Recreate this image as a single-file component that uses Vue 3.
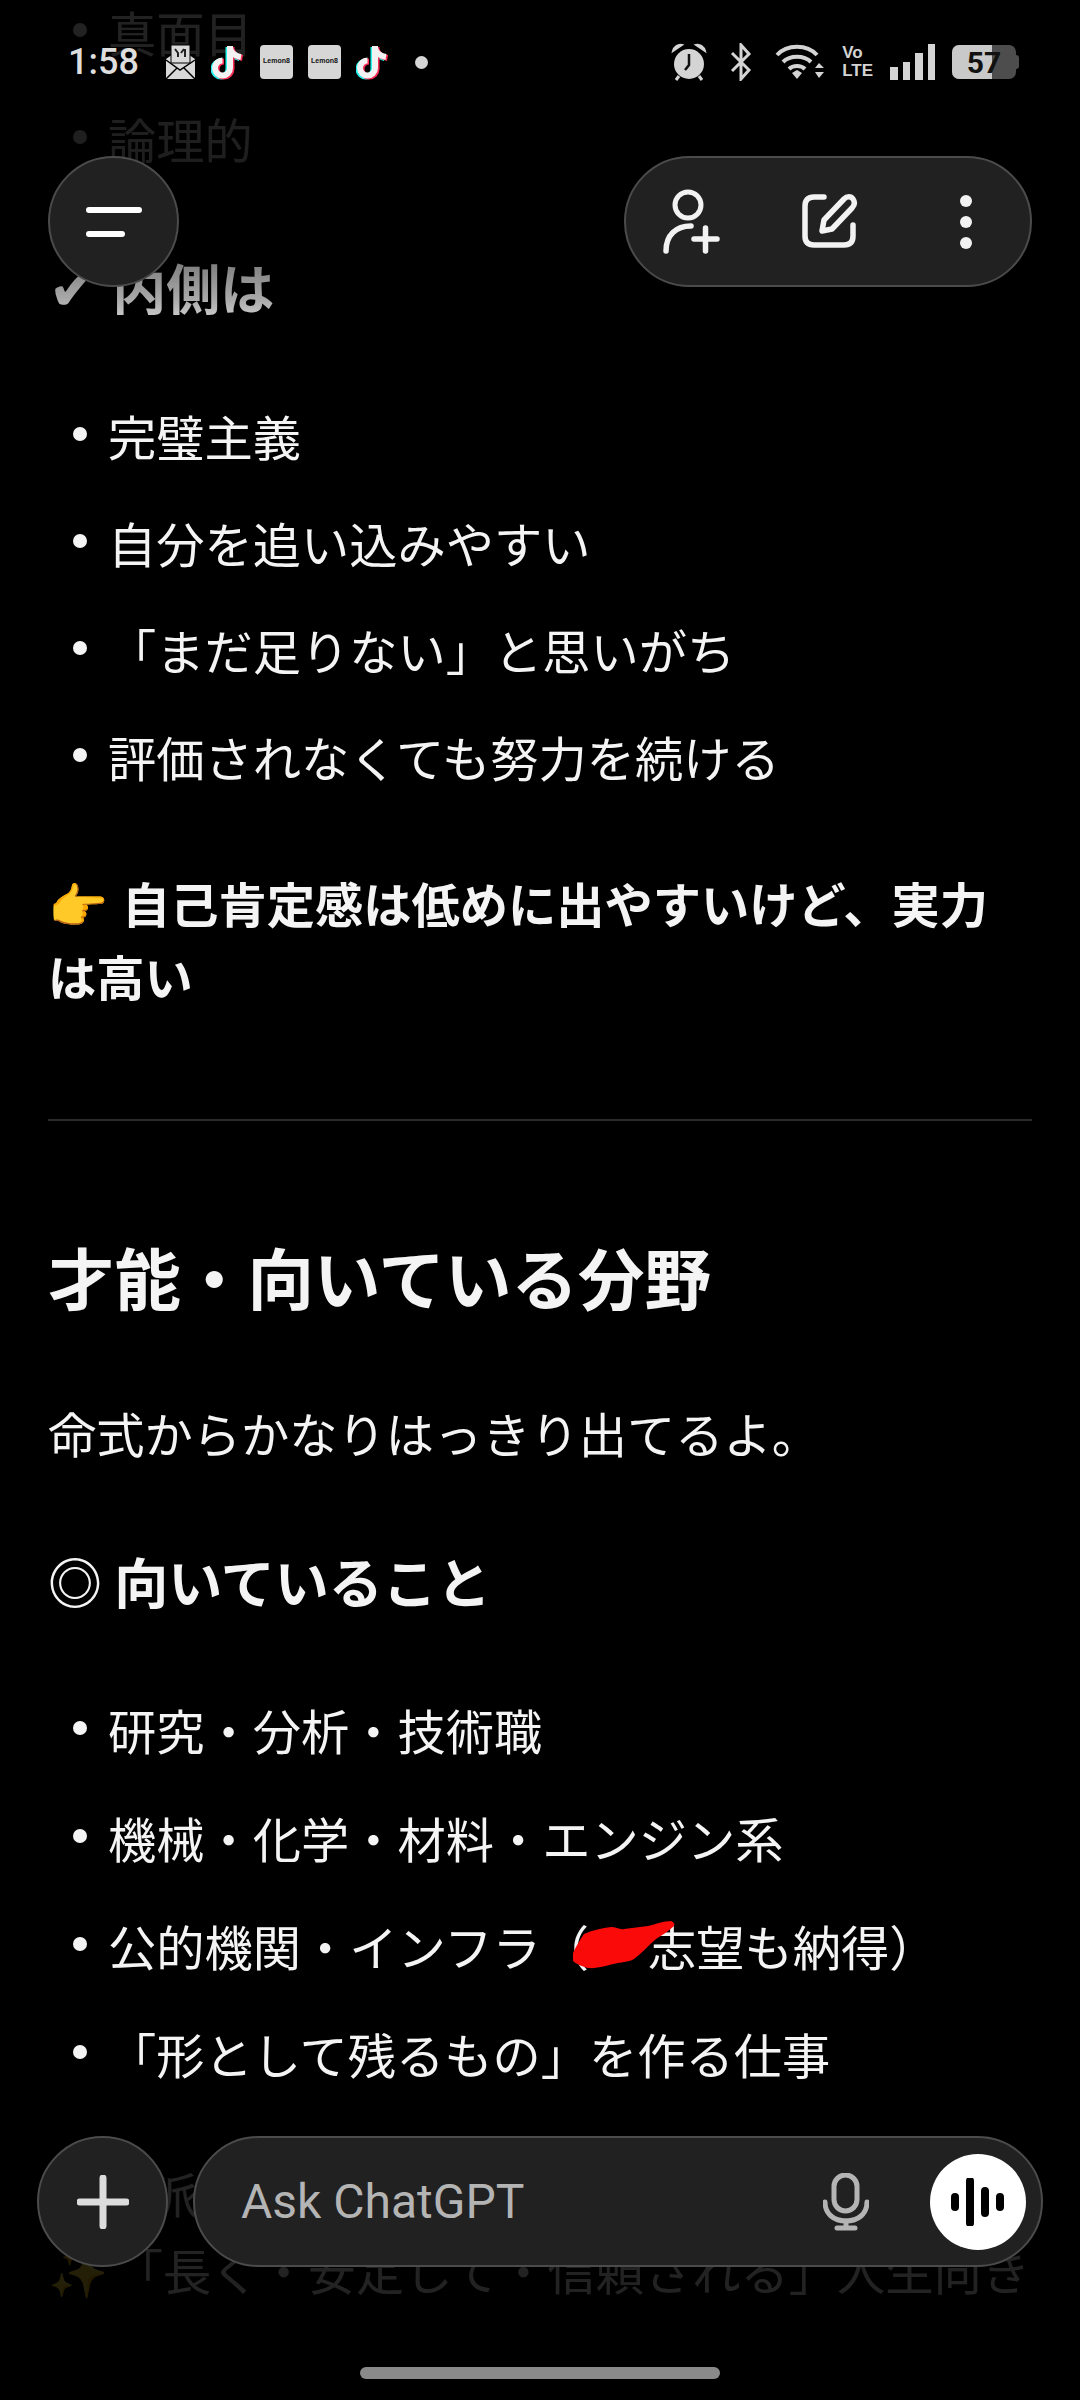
<script setup>
const innerTraits = ['完璧主義', '自分を追い込みやすい', '「まだ足りない」と思いがち', '評価されなくても努力を続ける']
const outerTraits = ['真面目', '論理的']
const goodAt = ['研究・分析・技術職', '機械・化学・材料・エンジン系']
</script>

<template>
  <div class="page">
    <div class="thread">
      <ul class="list first">
        <li v-for="t in outerTraits" :key="t">{{ t }}</li>
      </ul>
      <h3 class="sub inner_head"><span class="check">✔</span> 内側は</h3>
      <ul class="list">
        <li v-for="t in innerTraits" :key="t">{{ t }}</li>
      </ul>
      <p class="strong"><span class="emoji">👉</span> 自己肯定感は低めに出やすいけど、実力は高い</p>
      <hr class="rule" />
      <h2 class="title">才能・向いている分野</h2>
      <p class="lead">命式からかなりはっきり出てるよ。</p>
      <h3 class="sub">◎ 向いていること</h3>
      <ul class="list good">
        <li v-for="t in goodAt" :key="t">{{ t }}</li>
        <li>公的機関・インフラ（<span class="hidden_word"><svg class="scribble" viewBox="0 0 104 48"><path d="M13 13C22 9 31 7 40 6c5 0 9 3 13 2 8-1 16-2 24-3 8-2 16-5 23-5 3 1 4 3 3 5-5 5-12 9-18 13-7 6-14 14-22 20-5 3-11 3-16 4-10 2-21 6-30 5-8-2-13-5-15-7 0-3 0-6 0-8 3-7 7-13 11-19z" fill="#fb0a0a"/></svg></span>志望も納得）</li>
        <li>「形として残るもの」を作る仕事</li>
      </ul>
      <p class="after">派</p>
      <p class="last">✨ 「長く・安定して・信頼される」人生向き</p>
    </div>

    <div class="fade_top"></div>
    <div class="fade_bottom"></div>

    <div class="status">
      <div class="status_left">
        <span class="time">1:58</span>
        <svg class="s_icon" width="31" height="36" viewBox="0 0 31 36">
          <path d="M1 15L15.500 5 30 15v20H1z" fill="#d9d9d9"/>
          <rect x="6" y="1" width="19" height="18" fill="#d9d9d9" stroke="#000"/>
          <path d="M1 16l14 10 15-10M1 35l11-11M30 35L19 24" stroke="#000" stroke-width="1.500" fill="none"/>
          <path d="M10 5l3 4v4M19 5l-3 4M20 5v8" stroke="#222" stroke-width="2" fill="none"/>
        </svg>
        <svg class="s_icon tiktok" width="34" height="36" viewBox="0 0 34 36">
          <g fill="none" stroke-width="6">
            <path d="M19 2v22a7.500 7.500 0 1 1-7.500-7.500M19 4c1 5 5 8 11 9" stroke="#25f4ee" transform="translate(-1.500 1)"/>
            <path d="M19 2v22a7.500 7.500 0 1 1-7.500-7.500M19 4c1 5 5 8 11 9" stroke="#fe2c55" transform="translate(1.500 1)"/>
            <path d="M19 2v22a7.500 7.500 0 1 1-7.500-7.500M19 4c1 5 5 8 11 9" stroke="#f2f2f2"/>
          </g>
        </svg>
        <span class="lemon">Lemon8</span>
        <span class="lemon">Lemon8</span>
        <svg class="s_icon tiktok" width="34" height="36" viewBox="0 0 34 36">
          <g fill="none" stroke-width="6">
            <path d="M19 2v22a7.500 7.500 0 1 1-7.500-7.500M19 4c1 5 5 8 11 9" stroke="#25f4ee" transform="translate(-1.500 1)"/>
            <path d="M19 2v22a7.500 7.500 0 1 1-7.500-7.500M19 4c1 5 5 8 11 9" stroke="#fe2c55" transform="translate(1.500 1)"/>
            <path d="M19 2v22a7.500 7.500 0 1 1-7.500-7.500M19 4c1 5 5 8 11 9" stroke="#f2f2f2"/>
          </g>
        </svg>
        <span class="more_dot"></span>
      </div>
      <div class="status_right">
        <svg class="alarm" width="36" height="38" viewBox="0 0 36 38">
          <circle cx="18" cy="21" r="15" fill="#d4d4d4"/>
          <path d="M18 11v11l-4 5" stroke="#111" stroke-width="2.500" fill="none"/>
          <path d="M2 8c1-4 5-7 9-6zM34 8c-1-4-5-7-9-6z" fill="#d4d4d4" stroke="#d4d4d4" stroke-width="2"/>
          <path d="M8 33l-3 4M28 33l3 4" stroke="#d4d4d4" stroke-width="3"/>
        </svg>
        <svg class="bt" width="22" height="38" viewBox="0 0 22 38">
          <path d="M2 10l17 17-8 9V2l8 9L2 28" fill="none" stroke="#d4d4d4" stroke-width="3"/>
        </svg>
        <svg width="50" height="38" viewBox="0 0 50 38">
          <path d="M2 12c10-11 30-11 40 0M8 19c7-7 21-7 28 0M14 26c4-4 12-4 16 0" fill="none" stroke="#d4d4d4" stroke-width="4"/>
          <path d="M17 30l5-3 5 3-5 6z" fill="#d4d4d4"/>
          <path d="M40 25l4-5 5 5zM40 29l4 6 5-6z" fill="#d4d4d4"/>
        </svg>
        <span class="volte"><b>Vo</b><b>LTE</b></span>
        <span class="signal"><i style="height: 13px"></i><i style="height: 18px"></i><i style="height: 27px"></i><i style="height: 36px"></i></span>
        <span class="battery"><span class="battery_fill"></span><span class="battery_num">57</span><span class="battery_tip"></span></span>
      </div>
    </div>

    <button class="round_btn menu_btn">
      <svg width="56" height="32" viewBox="0 0 56 32">
        <path d="M3 4h50M3 28h33" stroke="#fff" stroke-width="6" stroke-linecap="round"/>
      </svg>
    </button>

    <div class="actions">
      <svg class="act" viewBox="0 0 60 66">
        <circle cx="27" cy="16" r="13" fill="none" stroke="#f2f2f2" stroke-width="5"/>
        <path d="M5 62c0-16 10-25 25-25" fill="none" stroke="#f2f2f2" stroke-width="5.500" stroke-linecap="round"/>
        <path d="M33 50h23M44.500 39v23" stroke="#f2f2f2" stroke-width="5.500" stroke-linecap="round"/>
      </svg>
      <svg class="act" viewBox="0 0 60 66">
        <path d="M25 8h-10c-6 0-9 3-9 9v30c0 6 3 9 9 9h30c6 0 9-3 9-9V36" fill="none" stroke="#f2f2f2" stroke-width="5.500" stroke-linecap="round"/>
        <path d="M23 42l2-11 20-21c3-3 7-3 9 0s2 6-1 9L33 40z" fill="none" stroke="#f2f2f2" stroke-width="5.500" stroke-linejoin="round"/>
      </svg>
      <svg class="act" viewBox="0 0 60 66">
        <circle cx="30" cy="12" r="6" fill="#f2f2f2"/>
        <circle cx="30" cy="33" r="6" fill="#f2f2f2"/>
        <circle cx="30" cy="54" r="6" fill="#f2f2f2"/>
      </svg>
    </div>

    <div class="composer">
      <button class="round_btn plus_btn">
        <svg width="52" height="54" viewBox="0 0 52 54">
          <path d="M3 27h46M26 3v48" stroke="#dcdcdc" stroke-width="7" stroke-linecap="round"/>
        </svg>
      </button>
      <div class="input">
        <span class="placeholder">Ask ChatGPT</span>
        <svg class="mic" width="46" height="58" viewBox="0 0 46 58">
          <rect x="11" y="2" width="23" height="36" rx="11.500" fill="none" stroke="#b4b4b4" stroke-width="5"/>
          <path d="M2 29c0 12 9 19 21 19s21-7 21-19" fill="none" stroke="#b4b4b4" stroke-width="5" stroke-linecap="round"/>
          <path d="M23 48v7M14 55h18" stroke="#b4b4b4" stroke-width="5" stroke-linecap="round"/>
        </svg>
        <span class="voice">
          <svg width="54" height="48" viewBox="0 0 54 48">
            <path d="M4 19v10M19 3v42M34 13v22M49 19v10" stroke="#000" stroke-width="8" stroke-linecap="round"/>
          </svg>
        </span>
      </div>
    </div>

    <div class="home_bar"></div>
  </div>
</template>

<style scoped>
.page {
  position: relative;
  width: 1080px;
  height: 2400px;
  overflow: hidden;
  background: #000;
  color: #f4f4f4;
  font-family: "Noto Sans CJK JP", "Noto Sans", "DejaVu Sans", sans-serif;
  font-size: 48.250px;
}
.thread {
  display: flex;
  flex-direction: column;
  padding: 0 48px;
  margin-top: -5px;
}
ul, p, h2, h3 {
  margin: 0;
  padding: 0;
}
.list {
  list-style: none;
  display: flex;
  flex-direction: column;
  gap: 34px;
  margin-top: 76px;
}
.list.first {
  margin-top: 0;
}
.list.good {
  margin-top: 76px;
  gap: 35px;
}
.list li {
  position: relative;
  padding-left: 60px;
  line-height: 73px;
  white-space: nowrap;
}
.list li::before {
  content: '';
  position: absolute;
  left: 25px;
  top: 28px;
  width: 14px;
  height: 14px;
  border-radius: 50%;
  background: #f4f4f4;
}
.sub {
  font-size: 54px;
  font-weight: 700;
  line-height: 73px;
  margin-top: 75px;
}
.inner_head {
  margin-top: 75px;
}
.check {
  font-family: "DejaVu Sans", sans-serif;
  font-size: 62px;
  line-height: 0;
}
.strong {
  font-weight: 700;
  line-height: 73px;
  margin-top: 73px;
  padding-right: 20px;
}
.emoji {
  line-height: 1;
  margin-right: 3px;
}
.rule {
  border: 0;
  height: 2px;
  background: #2a2a2a;
  margin: 107px 0 0;
}
.title {
  font-size: 66.500px;
  font-weight: 700;
  line-height: 90px;
  margin-top: 110px;
}
.lead {
  line-height: 73px;
  margin-top: 75px;
}
.hidden_word {
  display: inline-block;
  position: relative;
  width: 59px;
  height: 73px;
  vertical-align: top;
}
.scribble {
  position: absolute;
  left: -18px;
  top: 12px;
  width: 104px;
  height: 48px;
}
.after {
  font-weight: 400;
  line-height: 73px;
  margin-top: 66px;
  padding-left: 102px;
}
.last {
  line-height: 73px;
  margin-top: 4px;
  white-space: nowrap;
  word-spacing: -4px;
}
.fade_top {
  position: absolute;
  left: 0;
  right: 0;
  top: 0;
  height: 340px;
  background: linear-gradient(to bottom, rgba(0,0,0,.86) 0, rgba(0,0,0,.88) 175px, rgba(0,0,0,.45) 270px, rgba(0,0,0,.3) 300px, rgba(0,0,0,0) 340px);
}
.fade_bottom {
  position: absolute;
  left: 0;
  right: 0;
  top: 2100px;
  bottom: 0;
  background: linear-gradient(to bottom, rgba(0,0,0,0) 0, rgba(0,0,0,.86) 60px, rgba(0,0,0,.86) 100%);
}
.status {
  position: absolute;
  left: 68px;
  right: 61px;
  top: 42px;
  height: 40px;
  display: flex;
  justify-content: space-between;
  align-items: center;
}
.status_left, .status_right {
  display: flex;
  align-items: center;
}
.time {
  font-family: Roboto, sans-serif;
  font-weight: 500;
  font-size: 36px;
  color: #dedede;
  width: 97px;
}
.s_icon {
  margin-right: 15px;
}
.lemon {
  width: 33px;
  height: 34px;
  border-radius: 4px;
  background: #d6d6d6;
  color: #111;
  font-family: "Liberation Sans", sans-serif;
  font-size: 7px;
  font-weight: 700;
  line-height: 31px;
  text-align: center;
  overflow: hidden;
  margin-right: 15px;
}
.more_dot {
  width: 13px;
  height: 13px;
  border-radius: 50%;
  background: #d6d6d6;
  margin-left: 10px;
}
.status_right {
  gap: 17px;
}
.alarm {
  margin-right: 6px;
}
.bt {
  margin-right: 6px;
}
.volte {
  display: flex;
  flex-direction: column;
  font-family: "Liberation Sans", sans-serif;
  font-size: 17px;
  line-height: 18px;
  color: #d4d4d4;
}
.signal {
  display: flex;
  align-items: flex-end;
  gap: 5px;
  height: 36px;
}
.signal i {
  width: 7.500px;
  background: #d4d4d4;
}
.battery {
  position: relative;
  width: 64px;
  height: 34px;
  border-radius: 7px;
  background: #4d4d4d;
  display: flex;
  justify-content: center;
  align-items: center;
  margin-right: 3px;
}
.battery_fill {
  position: absolute;
  left: 0;
  top: 0;
  bottom: 0;
  width: 40px;
  border-radius: 7px 0 0 7px;
  background: #c9c9c9;
}
.battery_num {
  position: relative;
  font-family: Roboto, sans-serif;
  font-weight: 700;
  font-size: 30px;
  color: #111;
}
.battery_tip {
  position: absolute;
  right: -3px;
  top: 10px;
  width: 3px;
  height: 14px;
  border-radius: 0 3px 3px 0;
  background: #4d4d4d;
}
.round_btn {
  box-sizing: border-box;
  display: flex;
  align-items: center;
  justify-content: center;
  flex: none;
  width: 131px;
  height: 131px;
  padding: 0;
  border: 2px solid #4b4b4b;
  border-radius: 50%;
  background: #212121;
}
.menu_btn {
  position: absolute;
  left: 48px;
  top: 156px;
}
.actions {
  position: absolute;
  left: 624px;
  top: 156px;
  box-sizing: border-box;
  width: 408px;
  height: 131px;
  display: flex;
  align-items: center;
  gap: 77.500px;
  padding-left: 35px;
  border: 2px solid #4b4b4b;
  border-radius: 66px;
  background: #212121;
}
.act {
  width: 60px;
  height: 66px;
  flex: none;
}
.composer {
  position: absolute;
  left: 37px;
  top: 2136px;
  width: 1006px;
  display: flex;
  gap: 25px;
}
.input {
  box-sizing: border-box;
  flex: 1;
  height: 131px;
  display: flex;
  align-items: center;
  padding: 0 15px 0 46px;
  border: 2px solid #4b4b4b;
  border-radius: 66px;
  background: #212121;
}
.placeholder {
  flex: 1;
  font-family: Roboto, sans-serif;
  font-size: 48px;
  color: #b4b4b4;
}
.mic {
  margin-right: 61px;
}
.voice {
  width: 96px;
  height: 96px;
  border-radius: 50%;
  background: #fff;
  display: flex;
  align-items: center;
  justify-content: center;
}
.home_bar {
  position: absolute;
  left: 360px;
  top: 2367px;
  width: 360px;
  height: 12px;
  border-radius: 6px;
  background: #8a8a8a;
}
</style>

<style>
body {
  background: #000;
}
</style>
